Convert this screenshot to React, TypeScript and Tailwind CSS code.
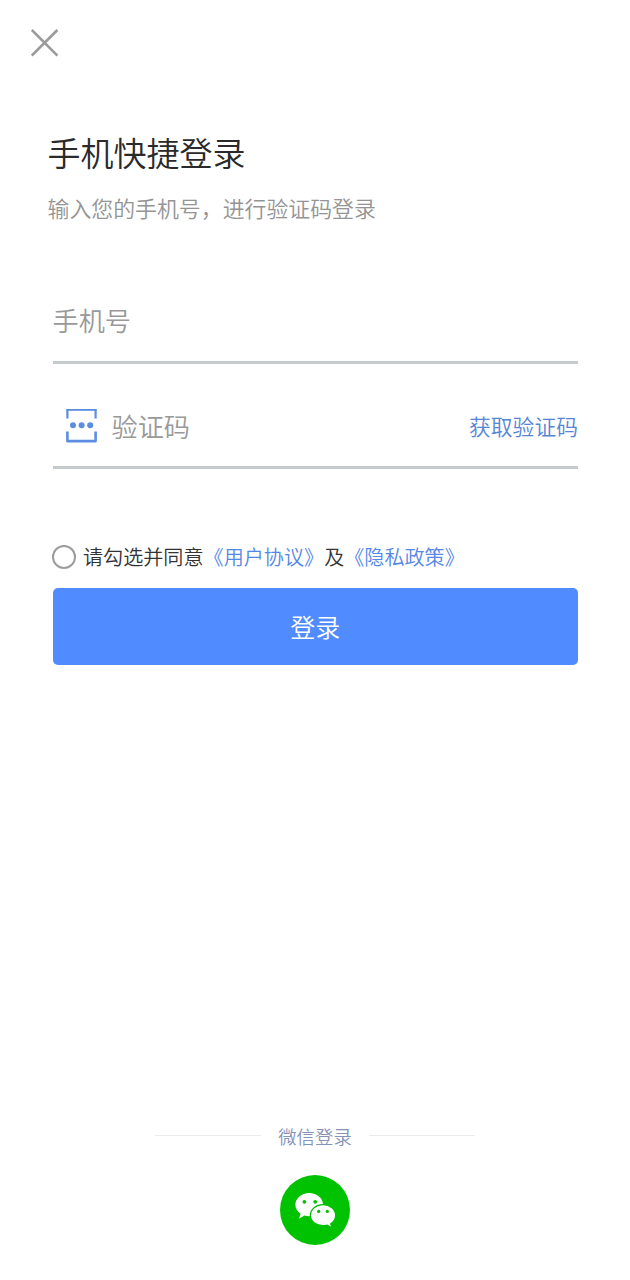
import { useState } from 'react'

function CloseIcon() {
  return (
    <svg width="28" height="28" viewBox="0 0 28 28" fill="none" stroke="#9b9b9b" strokeWidth="2.6">
      <path d="M.8 1 26.4 26.6M26.4 1 .8 26.6" />
    </svg>
  )
}

function CodeIcon() {
  return (
    <svg width="32" height="34" viewBox="0 0 32 34" fill="none" stroke="#5b8de0">
      <path d="M1.4 9.6V.6M29.6 9.6V.6" strokeWidth="2.2" />
      <path d="M.3 .9H30.7" strokeWidth="1.8" />
      <path d="M1.4 22.6V32.1H29.6V22.6" strokeWidth="2.6" strokeLinejoin="round" />
      <g fill="#5b8de0" stroke="none">
        <circle cx="7" cy="16.3" r="3" />
        <circle cx="15.6" cy="16.3" r="3" />
        <circle cx="24.2" cy="16.3" r="3" />
      </g>
    </svg>
  )
}

function WechatIcon() {
  return (
    <svg width="70" height="70" viewBox="0 0 70 70">
      <circle cx="35" cy="35" r="35" fill="#00c200" />
      <path
        d="M29.2 18C21.6 18 15.4 23.2 15.4 29.7c0 3.7 2 6.9 5.2 9.1l-1.7 4.9 5.6-3.2c1.5.4 3.1.7 4.7.7 7.6 0 13.8-5.2 13.8-11.6S36.8 18 29.2 18Z"
        fill="#fff"
      />
      <path
        d="M43 29.7c-7 0-12.6 4.7-12.6 10.5S36 50.7 43 50.7c1.5 0 2.9-.2 4.2-.6l4.8 2.9-1.3-4.3c3-1.9 4.9-5 4.9-8.5 0-5.8-5.6-10.5-12.6-10.5Z"
        fill="#fff"
        stroke="#00c200"
        strokeWidth="1.2"
      />
      <g fill="#00c200">
        <circle cx="24.4" cy="26.8" r="1.9" />
        <circle cx="35.2" cy="26.8" r="1.9" />
        <circle cx="38.7" cy="36.4" r="1.6" />
        <circle cx="47.3" cy="36.4" r="1.6" />
      </g>
    </svg>
  )
}

const inputClass =
  'min-w-0 flex-1 bg-transparent text-[26.2px] leading-[40px] text-[#333] outline-none placeholder:text-[#999]'

export default function App() {
  const [phone, setPhone] = useState('')
  const [code, setCode] = useState('')
  const [agreed, setAgreed] = useState(false)

  return (
    <div className="flex h-[1280px] w-[630px] flex-col bg-white font-['Noto_Sans_CJK_SC',sans-serif] font-[350]">
      <header className="flex h-[127px] pt-[29px] pl-[31px]">
        <button className="h-7 w-7" aria-label="关闭">
          <CloseIcon />
        </button>
      </header>

      <div className="pl-[47.5px]">
        <h1 className="text-[33px] leading-[50px] font-[350] text-[#2a2a2a]">手机快捷登录</h1>
        <p className="mt-[14px] text-[21.9px] leading-[34px] text-[#949494]">输入您的手机号，进行验证码登录</p>
      </div>

      <form className="mr-[52px] ml-[52.5px] mt-[75px] flex flex-col" onSubmit={(e) => e.preventDefault()}>
        <div className="flex h-[64px] border-b-[3px] border-[#c5cacd] pb-[21px]">
          <input
            className={inputClass}
            placeholder="手机号"
            value={phone}
            onChange={(e) => setPhone(e.target.value)}
          />
        </div>

        <div className="mt-[42px] flex h-[63px] items-center border-b-[3px] border-[#c5cacd] pb-[21px] pl-[13px]">
          <CodeIcon />
          <input
            className={`${inputClass} ml-[14px]`}
            placeholder="验证码"
            value={code}
            onChange={(e) => setCode(e.target.value)}
          />
          <button type="button" className="text-[21.8px] leading-[34px] text-[#5685d6]">
            获取验证码
          </button>
        </div>

        <div className="mt-[72px] flex h-8 items-center whitespace-nowrap text-[20.1px] leading-8 text-[#333]">
          <button
            type="button"
            role="checkbox"
            aria-checked={agreed}
            aria-label="同意协议"
            onClick={() => setAgreed(!agreed)}
            className={`-ml-[0.5px] mr-[7px] h-6 w-6 rounded-full border-2 border-[#9c9c9f] ${agreed ? 'bg-[#508cff]' : ''}`}
          />
          <span>请勾选并同意</span>
          <a className="text-[#5587e6]">《用户协议》</a>
          <span>及</span>
          <a className="text-[#5587e6]">《隐私政策》</a>
        </div>

        <button className="mt-[15px] h-[77px] rounded-[5px] bg-[#508cff] text-[25px] text-white">登录</button>
      </form>

      <footer className="mt-auto flex flex-col items-center pb-[35px]">
        <div className="flex items-start gap-[17px]">
          <span className="mt-[13px] h-px w-[106px] bg-[#ebebeb]" />
          <span className="text-[18.4px] leading-7 text-[#8592b8]">微信登录</span>
          <span className="mt-[13px] h-px w-[106px] bg-[#ebebeb]" />
        </div>
        <button className="mt-[25px] h-[70px] w-[70px]" aria-label="微信登录">
          <WechatIcon />
        </button>
      </footer>
    </div>
  )
}
